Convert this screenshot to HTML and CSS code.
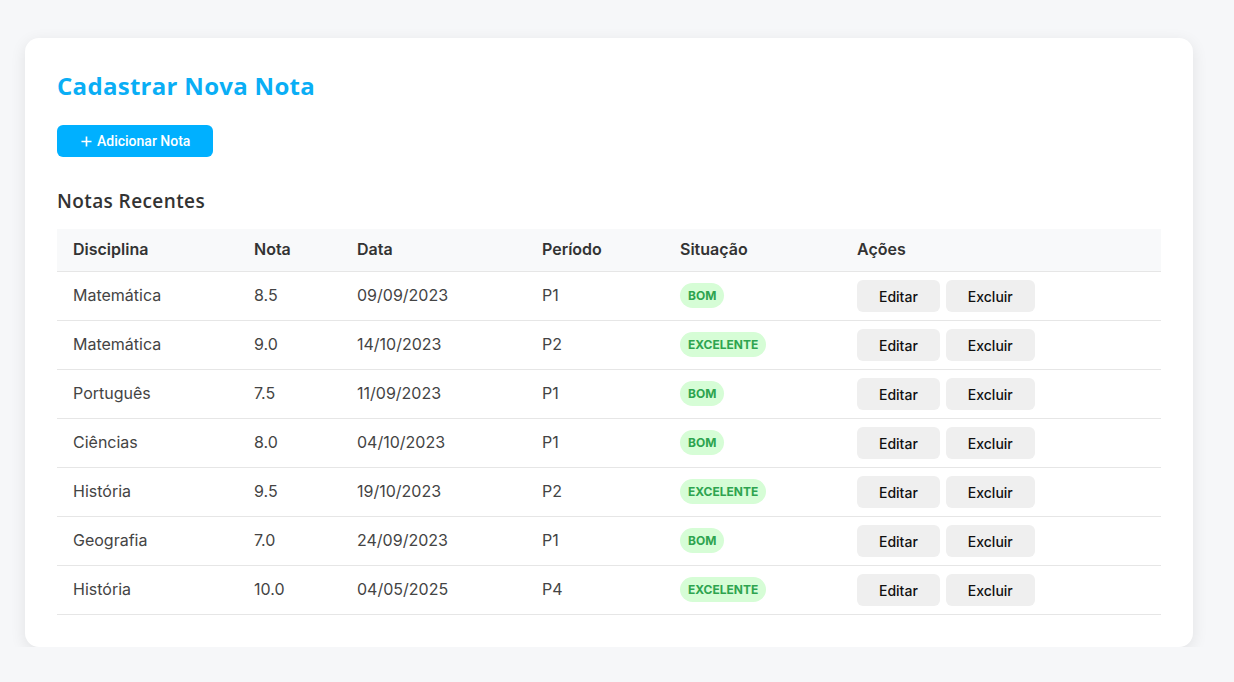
FILE: index.html
```html
<!DOCTYPE html>
<html lang="pt-BR">
<head>
<meta charset="utf-8">
<title>Notas</title>
<link rel="stylesheet" href="styles.css">
</head>
<body>
<main class="card">
  <h1 class="title">Cadastrar Nova Nota</h1>
  <button class="btn-primary"><svg class="plus" viewBox="0 0 12 12" width="11" height="11"><path d="M6 0.5v11M0.5 6h11" stroke="#fff" stroke-width="1.8" fill="none"/></svg>Adicionar Nota</button>
  <h2 class="subtitle">Notas Recentes</h2>
  <table class="grades">
    <colgroup>
      <col class="c1"><col class="c2"><col class="c3"><col class="c4"><col class="c5"><col class="c6">
    </colgroup>
    <thead>
      <tr><th>Disciplina</th><th>Nota</th><th>Data</th><th>Período</th><th>Situação</th><th>Ações</th></tr>
    </thead>
    <tbody>
      <tr><td>Matemática</td><td>8.5</td><td>09/09/2023</td><td>P1</td><td><span class="badge">BOM</span></td><td><div class="actions"><button class="btn">Editar</button><button class="btn">Excluir</button></div></td></tr>
      <tr><td>Matemática</td><td>9.0</td><td>14/10/2023</td><td>P2</td><td><span class="badge">EXCELENTE</span></td><td><div class="actions"><button class="btn">Editar</button><button class="btn">Excluir</button></div></td></tr>
      <tr><td>Português</td><td>7.5</td><td>11/09/2023</td><td>P1</td><td><span class="badge">BOM</span></td><td><div class="actions"><button class="btn">Editar</button><button class="btn">Excluir</button></div></td></tr>
      <tr><td>Ciências</td><td>8.0</td><td>04/10/2023</td><td>P1</td><td><span class="badge">BOM</span></td><td><div class="actions"><button class="btn">Editar</button><button class="btn">Excluir</button></div></td></tr>
      <tr><td>História</td><td>9.5</td><td>19/10/2023</td><td>P2</td><td><span class="badge">EXCELENTE</span></td><td><div class="actions"><button class="btn">Editar</button><button class="btn">Excluir</button></div></td></tr>
      <tr><td>Geografia</td><td>7.0</td><td>24/09/2023</td><td>P1</td><td><span class="badge">BOM</span></td><td><div class="actions"><button class="btn">Editar</button><button class="btn">Excluir</button></div></td></tr>
      <tr><td>História</td><td>10.0</td><td>04/05/2025</td><td>P4</td><td><span class="badge">EXCELENTE</span></td><td><div class="actions"><button class="btn">Editar</button><button class="btn">Excluir</button></div></td></tr>
    </tbody>
  </table>
</main>
</body>
</html>
```
FILE: styles.css
```css
* { box-sizing: border-box; }
html, body { margin: 0; padding: 0; }
body {
  background: #f6f7f9;
  font-family: Inter, "Liberation Sans", sans-serif;
  color: #333;
  padding: 38px 41px 0 25px;
}
.card {
  background: #fff;
  border-radius: 14px;
  box-shadow: 0 4px 16px rgba(0,0,0,0.09);
  padding: 32px 32px 32px 32px;
  width: 1168px;
}
.title {
  margin: 0;
  font-family: "Open Sans", "Liberation Sans", sans-serif;
  font-weight: 700;
  font-size: 24px;
  letter-spacing: 0.3px;
  line-height: 30px;
  color: #0aaef5;
  padding-top: 1px;
}
.btn-primary {
  margin-top: 24px;
  display: inline-flex;
  align-items: center;
  gap: 5px;
  height: 32px;
  padding: 0 23px 0 24px;
  border: none;
  border-radius: 6px;
  background: #00b0ff;
  color: #fff;
  font-family: Roboto, "Liberation Sans", sans-serif;
  font-weight: 500;
  font-size: 14px;
}
.plus { display: block; }
.subtitle {
  margin: 33px 0 17px;
  font-family: "Open Sans", "Liberation Sans", sans-serif;
  font-weight: 600;
  font-size: 19px;
  letter-spacing: 0.4px;
  line-height: 22px;
  color: #333;
}
.grades {
  width: 100%;
  border-collapse: collapse;
  table-layout: fixed;
}
.c1 { width: 181px; } .c2 { width: 103px; } .c3 { width: 185px; }
.c4 { width: 138px; } .c5 { width: 177px; } .c6 { width: 320px; }
.grades th {
  background: #f8f9fa;
  text-align: left;
  font-weight: 600;
  font-size: 16px;
  color: #333;
  height: 42px;
  padding: 0 16px 1px;
  border-bottom: 1px solid #e6e6e6;
}
.grades td {
  height: 49px;
  padding: 0 16px 1px;
  font-size: 16px;
  color: #444;
  border-bottom: 1px solid #e6e6e6;
  vertical-align: middle;
}
.badge {
  display: inline-block;
  background: #d6fdd6;
  color: #2ea44f;
  font-weight: 700;
  font-size: 12px;
  line-height: 25px;
  height: 25px;
  padding: 0 8px;
  border-radius: 13px;
}
.actions { display: flex; gap: 6px; margin-top: 2px; }
.btn {
  height: 32px;
  padding: 0 22px;
  border: none;
  border-radius: 6px;
  background: #efefef;
  color: #111;
  font-family: Inter, "Liberation Sans", sans-serif;
  font-weight: 500;
  font-size: 14px;
}
```
